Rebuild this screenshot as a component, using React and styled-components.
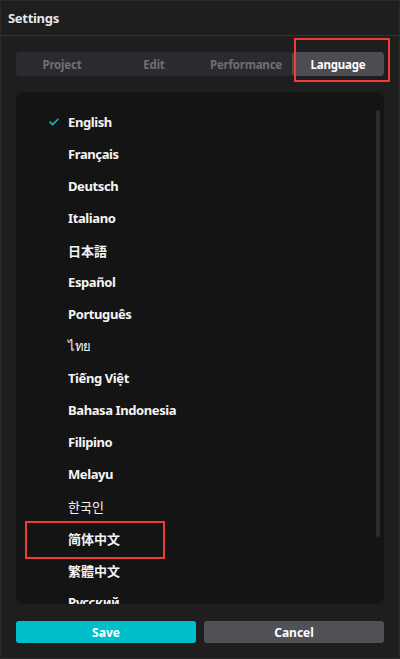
import React, { useState } from 'react';
import styled, { createGlobalStyle } from 'styled-components';

const COLORS = {
  window: '#1e1e1e',
  edge: '#2a2a2a',
  divider: '#333333',
  panel: '#141414',
  tabs: '#2b2b2f',
  tabActive: '#4c4c53',
  tabText: '#6f6f73',
  text: '#f4f4f4',
  accent: '#00bfca',
  cancel: '#505057',
  scroll: '#2c2c2c',
  mark: '#f23a3a',
};

const FONT = '"Noto Sans", "Noto Sans CJK SC", "Noto Sans CJK KR", "DejaVu Sans", sans-serif';

const TABS = ['Project', 'Edit', 'Performance', 'Language'];

const LANGUAGES = [
  { label: 'English' },
  { label: 'Français' },
  { label: 'Deutsch' },
  { label: 'Italiano' },
  { label: '日本語', font: '"Noto Sans CJK JP", sans-serif' },
  { label: 'Español' },
  { label: 'Português' },
  { label: 'ไทย', light: true },
  { label: 'Tiếng Việt' },
  { label: 'Bahasa Indonesia' },
  { label: 'Filipino' },
  { label: 'Melayu' },
  { label: '한국인', font: '"Noto Sans CJK KR", sans-serif', light: true },
  { label: '简体中文', font: '"Noto Sans CJK SC", sans-serif', marked: true },
  { label: '繁體中文', font: '"Noto Sans CJK TC", sans-serif' },
  { label: 'Русский' },
];

const GlobalStyle = createGlobalStyle`
  html, body {
    margin: 0;
    padding: 0;
    background: ${COLORS.window};
  }
  * {
    box-sizing: border-box;
  }
`;

const Check = () => (
  <svg width="10" height="8" viewBox="0 0 10 8" fill="none">
    <path
      d="M1 4.2 L3.6 6.6 L9 1.2"
      stroke={COLORS.accent}
      strokeWidth="1.6"
      strokeLinecap="round"
      strokeLinejoin="round"
    />
  </svg>
);

const App = () => {
  const [tab, setTab] = useState('Language');
  const [language, setLanguage] = useState('English');

  return (
    <>
      <GlobalStyle />
      <Window>
        <Header>Settings</Header>
        <Body>
          <TabBar>
            {TABS.map((name) => (
              <Tab
                key={name}
                $active={name === tab}
                onClick={() => setTab(name)}
              >
                {name}
                {name === 'Language' && <Highlight $tab />}
              </Tab>
            ))}
          </TabBar>
          <ListPanel>
            <List>
              {LANGUAGES.map((item) => (
                <Item
                  key={item.label}
                  onClick={() => setLanguage(item.label)}
                >
                  <CheckSlot>
                    {item.label === language && <Check />}
                  </CheckSlot>
                  <Label $font={item.font} $light={item.light}>
                    {item.label}
                  </Label>
                  {item.marked && <Highlight />}
                </Item>
              ))}
            </List>
            <ScrollThumb />
          </ListPanel>
          <Actions>
            <Button $primary>Save</Button>
            <Button>Cancel</Button>
          </Actions>
        </Body>
      </Window>
    </>
  );
};

const Window = styled.div`
  display: flex;
  flex-direction: column;
  width: 400px;
  height: 659px;
  background: ${COLORS.window};
  border: 1px solid ${COLORS.edge};
  font-family: ${FONT};
  color: ${COLORS.text};
`;

const Header = styled.div`
  display: flex;
  align-items: center;
  height: 35px;
  padding-left: 7px;
  padding-bottom: 1px;
  border-bottom: 1px solid ${COLORS.divider};
  font-size: 13px;
  font-weight: 700;
  letter-spacing: -0.3px;
  color: #e6e6e6;
`;

const Body = styled.div`
  flex: 1;
  display: flex;
  flex-direction: column;
  padding: 16px 15px 15px;
  min-height: 0;
`;

const TabBar = styled.div`
  display: grid;
  grid-template-columns: repeat(4, 1fr);
  height: 24px;
  background: ${COLORS.tabs};
  border-radius: 4px;
`;

const Tab = styled.button`
  position: relative;
  border: none;
  padding: 0;
  border-radius: 4px;
  background: ${(p) => (p.$active ? COLORS.tabActive : 'transparent')};
  color: ${(p) => (p.$active ? '#ffffff' : COLORS.tabText)};
  font-family: ${FONT};
  font-size: 11.5px;
  font-weight: 700;
  letter-spacing: -0.2px;
  cursor: pointer;
`;

const Highlight = styled.span`
  position: absolute;
  pointer-events: none;
  border: 2px solid ${COLORS.mark};
  ${(p) =>
    p.$tab
      ? `top: -14px; left: 2px; width: 96px; height: 44px;`
      : `top: -1px; left: 9px; width: 140px; height: 38px;`}
`;

const ListPanel = styled.div`
  position: relative;
  height: 512px;
  margin-top: 16px;
  background: ${COLORS.panel};
  border-radius: 8px;
  overflow: hidden;
`;

const List = styled.ul`
  list-style: none;
  margin: 0;
  padding: 14px 0 0;
`;

const Item = styled.li`
  position: relative;
  display: flex;
  align-items: center;
  height: 32px;
  cursor: pointer;
`;

const CheckSlot = styled.span`
  display: flex;
  align-items: center;
  width: 52px;
  padding-left: 33px;
`;

const Label = styled.span`
  font-family: ${(p) => p.$font || FONT};
  font-size: 13px;
  font-weight: ${(p) => (p.$light ? 400 : 700)};
  letter-spacing: ${(p) => (p.$font ? '0' : '-0.4px')};
  color: ${COLORS.text};
`;

const ScrollThumb = styled.div`
  position: absolute;
  top: 18px;
  right: 4px;
  width: 4px;
  height: 427px;
  border-radius: 2px;
  background: ${COLORS.scroll};
`;

const Actions = styled.div`
  display: grid;
  grid-template-columns: 1fr 1fr;
  gap: 8px;
  margin-top: 17px;
`;

const Button = styled.button`
  height: 22px;
  border: none;
  border-radius: 3px;
  background: ${(p) => (p.$primary ? COLORS.accent : COLORS.cancel)};
  color: #ffffff;
  font-family: ${FONT};
  font-size: 12px;
  font-weight: 700;
  cursor: pointer;
`;

export default App;
